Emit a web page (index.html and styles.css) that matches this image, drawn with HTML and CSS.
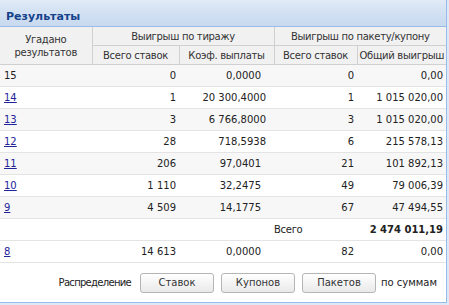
FILE: index.html
```html
<!DOCTYPE html>
<html lang="ru">
<head>
<meta charset="utf-8">
<link rel="stylesheet" href="styles.css">
</head>
<body>
<div class="panel">
  <div class="panel-header">Результаты</div>
  <table class="grid">
    <colgroup>
      <col class="c1"><col class="c2"><col class="c3"><col class="c4"><col class="c5">
    </colgroup>
    <thead>
      <tr class="h1">
        <th rowspan="2" class="first">Угадано<br>результатов</th>
        <th colspan="2">Выигрыш по тиражу</th>
        <th colspan="2">Выигрыш по пакету/купону</th>
      </tr>
      <tr class="h2">
        <th>Всего ставок</th>
        <th>Коэф. выплаты</th>
        <th>Всего ставок</th>
        <th>Общий выигрыш</th>
      </tr>
    </thead>
    <tbody>
      <tr class="odd"><td>15</td><td class="num">0</td><td class="coef">0,0000</td><td class="cnt">0</td><td class="num">0,00</td></tr>
      <tr><td><a href="#">14</a></td><td class="num">1</td><td class="coef wide">20 300,4000</td><td class="cnt">1</td><td class="num">1 015 020,00</td></tr>
      <tr class="odd"><td><a href="#">13</a></td><td class="num">3</td><td class="coef wide">6 766,8000</td><td class="cnt">3</td><td class="num">1 015 020,00</td></tr>
      <tr><td><a href="#">12</a></td><td class="num">28</td><td class="coef wide">718,5938</td><td class="cnt">6</td><td class="num">215 578,13</td></tr>
      <tr class="odd"><td><a href="#">11</a></td><td class="num">206</td><td class="coef">97,0401</td><td class="cnt">21</td><td class="num">101 892,13</td></tr>
      <tr><td><a href="#">10</a></td><td class="num">1 110</td><td class="coef">32,2475</td><td class="cnt">49</td><td class="num">79 006,39</td></tr>
      <tr class="odd"><td><a href="#">9</a></td><td class="num">4 509</td><td class="coef">14,1775</td><td class="cnt">67</td><td class="num">47 494,55</td></tr>
      <tr class="total"><td></td><td></td><td></td><td class="total-label">Всего</td><td class="num total-sum">2 474 011,19</td></tr>
      <tr class="last"><td><a href="#">8</a></td><td class="num">14 613</td><td class="coef">0,0000</td><td class="cnt">82</td><td class="num">0,00</td></tr>
    </tbody>
  </table>
  <div class="footer">
    <span class="label first-label">Распределение</span>
    <button class="btn">Ставок</button>
    <button class="btn">Купонов</button>
    <button class="btn">Пакетов</button>
    <span class="label last-label">по суммам</span>
  </div>
</div>
</body>
</html>
```

FILE: styles.css
```css
html, body {
  margin: 0;
  padding: 0;
  background: #dfe8f6;
  font-family: "DejaVu Sans", Tahoma, sans-serif;
  font-size: 10px;
  color: #222;
}

.panel {
  width: 446px;
  background: #fff;
  border-right: 1px solid #99bbe8;
  border-bottom: 1px solid #99bbe8;
}

.panel-header {
  height: 19px;
  padding-top: 7px;
  line-height: 19px;
  padding-left: 6px;
  font-weight: bold;
  font-size: 11px;
  color: #15428b;
  background: linear-gradient(#e2ebf7 0%, #d4e2f3 40%, #c8daef 100%);
  border-bottom: 1px solid #99bbe8;
}

.grid {
  width: 446px;
  border-collapse: collapse;
  table-layout: fixed;
}

.c1 { width: 92px; }
.c2 { width: 87px; }
.c3 { width: 95px; }
.c4 { width: 83px; }
.c5 { width: 89px; }

.grid th {
  background: #f1f1f1;
  font-weight: normal;
  color: #333;
  border: 1px solid #d0d0d0;
  padding: 0 2px;
  text-align: center;
  white-space: nowrap;
  letter-spacing: -0.3px;
}

.grid th.first {
  border-left: none;
  line-height: 13px;
  padding-top: 4px;
}

.grid tr.h1 th { height: 17px; border-top: none; padding-top: 1px; }
.grid tr.h2 th { height: 18px; }
.grid tr.h1 th:last-child,
.grid tr.h2 th:last-child { border-right: none; }

.grid td {
  height: 21px;
  padding: 0 4px;
  border-bottom: 1px solid #e4e4e4;
  white-space: nowrap;
}

.grid tr.odd td { background: #f7f7f7; }

.grid td.num { text-align: right; padding-right: 3px; }
.grid td.coef { text-align: right; padding-right: 13px; }
.grid td.coef.wide { padding-right: 8px; }
.grid td.cnt { text-align: right; padding-right: 3px; }

.grid a { color: #23239b; }

.grid td.total-label { text-align: left; padding-left: 0; letter-spacing: -0.3px; }
.grid td.total-sum { font-weight: bold; font-size: 10px; }

.footer {
  height: 39px;
  display: flex;
  align-items: center;
  justify-content: flex-end;
  padding-right: 9px;
  gap: 7px;
  color: #222;
}

.footer .first-label { margin-right: 2px; letter-spacing: -0.7px; }
.footer .last-label { margin-left: -2px; }

.btn {
  width: 74px;
  height: 20px;
  font-family: "DejaVu Sans", Tahoma, sans-serif;
  font-size: 10px;
  color: #333;
  background: linear-gradient(#ffffff, #e9e9e9);
  border: 1px solid #b5b5b5;
  border-radius: 3px;
  padding: 0;
}
```
